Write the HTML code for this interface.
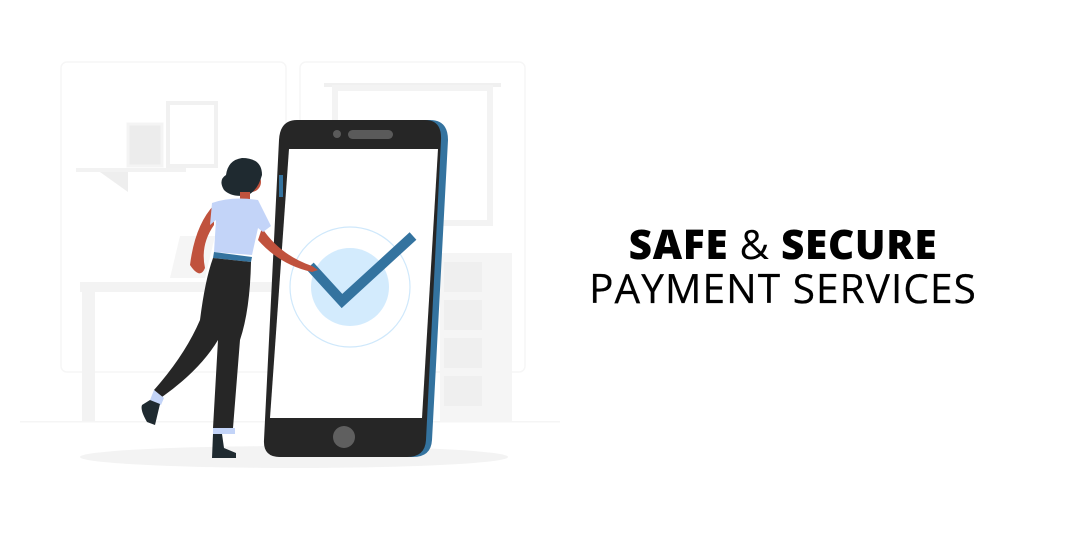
<!DOCTYPE html>
<html><head><meta charset="utf-8"><style>
html,body{margin:0;padding:0;background:#fff;width:1080px;height:552px;overflow:hidden}
svg{position:absolute;left:0;top:0}
.t{position:absolute;width:460px;text-align:center;color:#000;font-family:"Open Sans","DejaVu Sans","Liberation Sans",sans-serif;white-space:nowrap}
.l1{left:553px;top:216px;font-size:40.5px;letter-spacing:0.7px}
.l2{left:553px;top:260px;font-size:40.5px;letter-spacing:1.1px;font-weight:500;-webkit-text-stroke:0.3px #000}
</style></head><body>
<svg width="1080" height="552" viewBox="0 0 1080 552">
<rect x="61" y="62" width="225" height="310" rx="6" fill="none" stroke="#f6f6f6" stroke-width="1.5"/>
<rect x="300" y="62" width="225" height="310" rx="6" fill="none" stroke="#f6f6f6" stroke-width="1.5"/>
<rect x="324" y="83" width="177" height="4" fill="#f0f0f0"/>
<rect x="335" y="88" width="155" height="135" fill="none" stroke="#f3f3f3" stroke-width="6"/>
<rect x="76" y="168" width="110" height="4" fill="#f2f2f2"/>
<polygon points="100,172 128,172 128,192" fill="#eeeeee"/>
<rect x="128" y="124" width="34" height="42" fill="#ececec" stroke="#f4f4f4" stroke-width="3"/>
<rect x="168" y="103" width="48" height="63" fill="none" stroke="#f1f1f1" stroke-width="4"/>
<polygon points="180,236 215,236 205,278 170,278" fill="#f5f5f5"/>
<rect x="80" y="282" width="195" height="10" fill="#f3f3f3"/>
<rect x="82" y="292" width="13" height="130" fill="#f3f3f3"/>
<rect x="440" y="253" width="72" height="168" fill="#f5f5f5"/>
<rect x="444" y="262" width="38" height="30" fill="#efefef"/>
<rect x="444" y="300" width="38" height="30" fill="#efefef"/>
<rect x="444" y="338" width="38" height="30" fill="#efefef"/>
<rect x="444" y="376" width="38" height="30" fill="#efefef"/>
<rect x="20" y="421" width="540" height="1.5" fill="#f5f5f5"/>
<ellipse cx="294" cy="457" rx="214" ry="11" fill="#f3f3f3"/>
<path d="M302,120 L430,120 Q448,120 448,140 L432,440 Q431,457 413,457 L282,457 Q265,457 266,440 L283,140 Q284,120 302,120Z" fill="#34739f"/>
<path d="M297,120 L425,120 Q442,120 441,140 L426,440 Q425,457 407,457 L280,457 Q263,457 264,440 L279,140 Q280,120 297,120Z" fill="#262626"/>
<path d="M289,149 L438,149 L422,418 L270,418 Z" fill="#fff"/>
<rect x="348" y="130" width="45" height="9" rx="4.5" fill="#5a5a5a"/>
<circle cx="337" cy="134" r="4" fill="#5a5a5a"/>
<circle cx="344" cy="437" r="11" fill="#5f5f5f"/>
<rect x="279" y="175" width="4" height="22" fill="#34739f"/>
<circle cx="350" cy="287" r="60" fill="none" stroke="#cfe8fb" stroke-width="1.2"/>
<circle cx="350" cy="287" r="39" fill="#d3ebfd"/>
<polyline points="310,266 342,301 413,236" fill="none" stroke="#34739f" stroke-width="10" stroke-linejoin="miter"/>
<path d="M214,205 Q195,225 190,265 Q200,280 205,268 Q200,245 214,225Z" fill="#c0523d"/>
<path d="M262,228 Q280,255 312,266 L318,270 L312,272 Q280,265 258,240Z" fill="#c0523d"/>
<circle cx="251" cy="182" r="10" fill="#c0523d"/>
<path d="M242,158 Q262,158 262,175 Q258,190 248,195 Q232,198 224,190 Q218,180 226,175 Q228,160 242,158Z" fill="#1f2a30"/>
<rect x="240" y="192" width="10" height="10" fill="#c0523d"/>
<path d="M212,203 Q232,196 258,200 L271,226 L263,232 L258,228 L252,255 L214,252 L216,220 L210,225 Z" fill="#c3d4f8"/>
<path d="M214,252 L252,257 L251,262 L213,258Z" fill="#34739f"/>
<path d="M213,258 L251,262 Q250,310 240,340 L233,428 L213,428 L218,340 Q200,370 162,397 L154,390 Q185,355 200,320 Q205,280 213,258Z" fill="#262626"/>
<rect x="213" y="428" width="22" height="6" fill="#c3d4f8"/>
<path d="M213,434 L222,434 L224,448 L236,453 L236,458 L212,458 Z" fill="#1f2a30"/>
<polygon points="154,390 164,398 161,405 150,400" fill="#c3d4f8"/>
<path d="M150,400 L160,404 L155,425 L147,422 Q140,410 142,405Z" fill="#1f2a30"/>
</svg>
<div class="t l1"><b style="font-weight:900">SAFE</b> &amp; <b style="font-weight:900">SECURE</b></div>
<div class="t l2">PAYMENT SERVICES</div>
</body></html>
